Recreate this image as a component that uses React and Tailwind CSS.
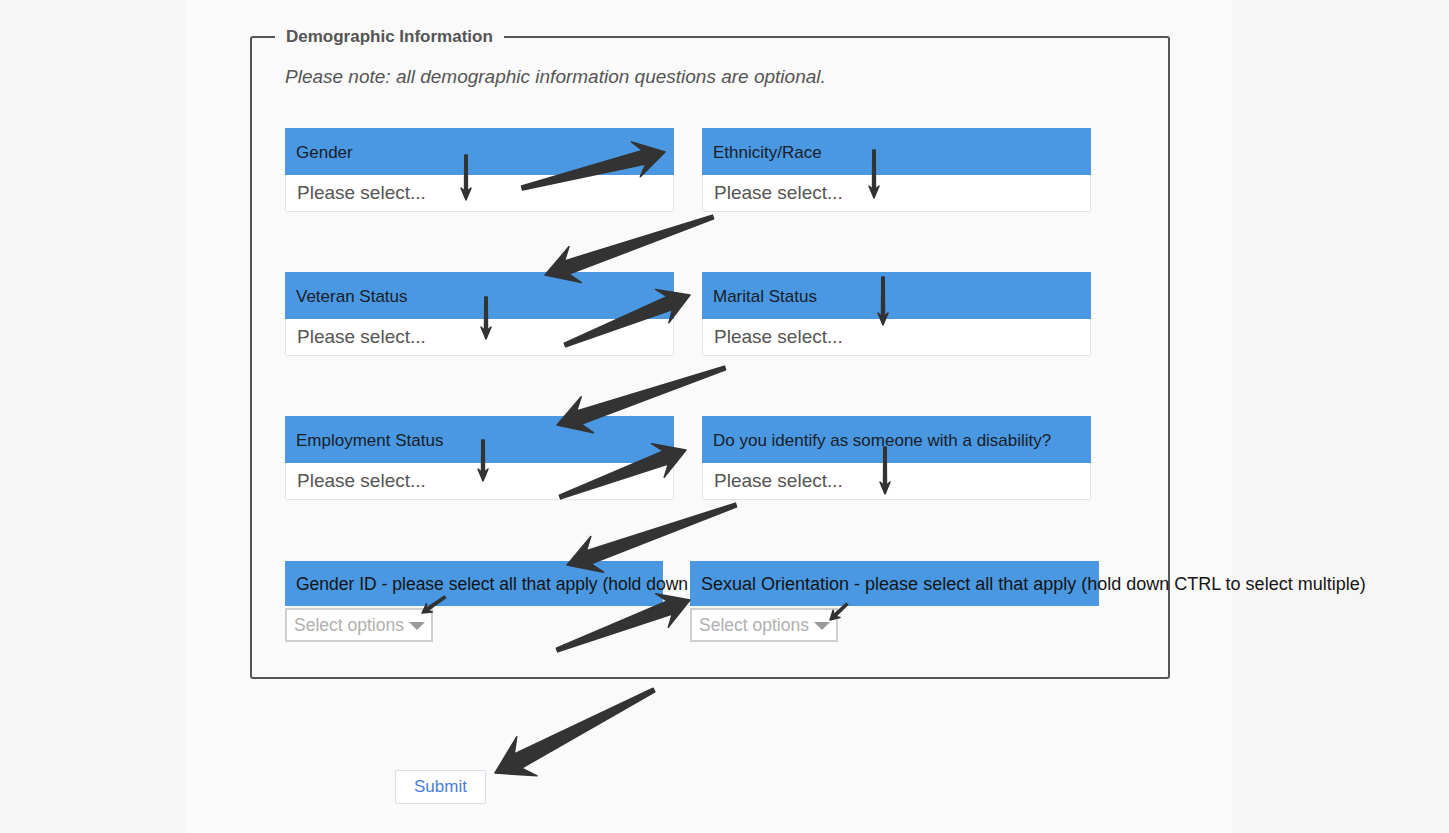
import React from 'react'

const font = { fontFamily: '"Liberation Sans", Arial, sans-serif' }

// annotation arrows drawn over the form: tail -> tip
const arrows = [
  { from: [522, 188], to: [665, 152], head: 30, wing: 18, neck: 7, tail: 2 },
  { from: [713, 217], to: [545, 275], head: 32, wing: 19, neck: 7, tail: 2 },
  { from: [565, 345], to: [690, 295], head: 30, wing: 18, neck: 7, tail: 2 },
  { from: [725, 368], to: [557, 425], head: 32, wing: 19, neck: 7, tail: 2 },
  { from: [560, 497], to: [686, 450], head: 30, wing: 18, neck: 7, tail: 2 },
  { from: [736, 505], to: [567, 565], head: 32, wing: 19, neck: 7, tail: 2 },
  { from: [557, 650], to: [690, 600], head: 30, wing: 18, neck: 7, tail: 2 },
  { from: [654, 690], to: [495, 773], head: 36, wing: 22, neck: 8, tail: 2 },
  { from: [466, 155], to: [466, 200], head: 12, wing: 5, neck: 1.5, tail: 1.2 },
  { from: [874, 150], to: [874, 198], head: 12, wing: 5, neck: 1.5, tail: 1.2 },
  { from: [486, 297], to: [486, 339], head: 12, wing: 5, neck: 1.5, tail: 1.2 },
  { from: [883, 277], to: [883, 325], head: 12, wing: 5, neck: 1.5, tail: 1.2 },
  { from: [483, 440], to: [483, 481], head: 12, wing: 5, neck: 1.5, tail: 1.2 },
  { from: [885, 447], to: [885, 494], head: 12, wing: 5, neck: 1.5, tail: 1.2 },
  { from: [445, 597], to: [422, 613], head: 9, wing: 5, neck: 1.3, tail: 1 },
  { from: [847, 604], to: [830, 620], head: 9, wing: 5, neck: 1.3, tail: 1 },
]

function arrowPoints({ from, to, head, wing, neck, tail }) {
  const [x1, y1] = from
  const [x2, y2] = to
  const len = Math.hypot(x2 - x1, y2 - y1)
  const ux = (x2 - x1) / len
  const uy = (y2 - y1) / len
  const nx = -uy
  const ny = ux
  const bx = x2 - ux * head
  const by = y2 - uy * head
  const kx = x2 - ux * head * 0.72
  const ky = y2 - uy * head * 0.72
  const pts = [
    [x1 + nx * tail, y1 + ny * tail],
    [kx + nx * neck, ky + ny * neck],
    [bx + nx * wing, by + ny * wing],
    [x2, y2],
    [bx - nx * wing, by - ny * wing],
    [kx - nx * neck, ky - ny * neck],
    [x1 - nx * tail, y1 - ny * tail],
  ]
  return pts.map(p => p.join(',')).join(' ')
}

function Field({ label }) {
  return (
    <div className="flex flex-col">
      <div className="h-[47px] bg-[#4a98e1] pl-[11px] flex items-center pt-[2px] whitespace-nowrap text-[17px] text-[#18202a]">{label}</div>
      <div className="h-[37px] bg-white border border-[#dfe5ec] border-t-0 rounded-b-[2px] pl-[11px] flex items-center text-[19px] text-[#555]">
        Please select...
      </div>
    </div>
  )
}

function MultiField({ label, width, front, size }) {
  return (
    <div className={`flex flex-col ${front ? 'relative' : ''}`} style={{ width }}>
      <div className={`h-[45px] bg-[#4a98e1] pl-[11px] flex items-center pt-[2px] whitespace-nowrap text-[#151515] ${size}`}>{label}</div>
      <div className="mt-[2px] h-[34px] w-[148px] bg-white border-2 border-[#cfcfcf] pl-[7px] flex items-center gap-[5px] text-[17.5px] text-[#b0b0b0]">
        Select options
        <span className="w-0 h-0 border-l-[8px] border-r-[8px] border-t-[8px] border-l-transparent border-r-transparent border-t-[#9a9a9a] mt-[2px]"></span>
      </div>
    </div>
  )
}

export default function App() {
  return (
    <div className="relative min-h-screen h-[833px] bg-[#f6f6f6] overflow-hidden" style={font}>
      <div className="ml-[185px] w-[1047px] h-full bg-[#fafafa] pt-[24px]">
        <fieldset className="ml-[65px] w-[920px] border-2 border-[#555] rounded-[3px] pl-[33px] pr-[79px] pb-[35px] min-w-0">
          <legend className="ml-[-10px] px-[11px] text-[17px] font-bold text-[#555]">Demographic Information</legend>

          <p className="mt-[13px] text-[19px] italic text-[#555]">Please note: all demographic information questions are optional.</p>

          <div className="mt-[37px] grid grid-cols-2 gap-x-[28px] gap-y-[60px] w-[806px]">
            <Field label="Gender" />
            <Field label="Ethnicity/Race" />
            <Field label="Veteran Status" />
            <Field label="Marital Status" />
            <Field label="Employment Status" />
            <Field label="Do you identify as someone with a disability?" />
          </div>

          <div className="mt-[61px] flex gap-[27px]">
            <MultiField label="Gender ID - please select all that apply (hold down CTRL to select multiple)" width={378} size="text-[17.5px]" />
            <MultiField label="Sexual Orientation - please select all that apply (hold down CTRL to select multiple)" width={409} size="text-[18px]" front />
          </div>
        </fieldset>

        <button className="mt-[91px] ml-[210px] w-[91px] h-[34px] bg-white border border-[#d7dfe8] rounded-[2px] text-[17px] text-[#4a7fd6]">
          Submit
        </button>
      </div>

      <svg className="absolute inset-0 pointer-events-none" width="1449" height="833">
        {arrows.map((a, i) => (
          <polygon key={i} points={arrowPoints(a)} fill="#333" stroke="#333" strokeWidth="1.5" strokeLinejoin="round" />
        ))}
      </svg>
    </div>
  )
}
